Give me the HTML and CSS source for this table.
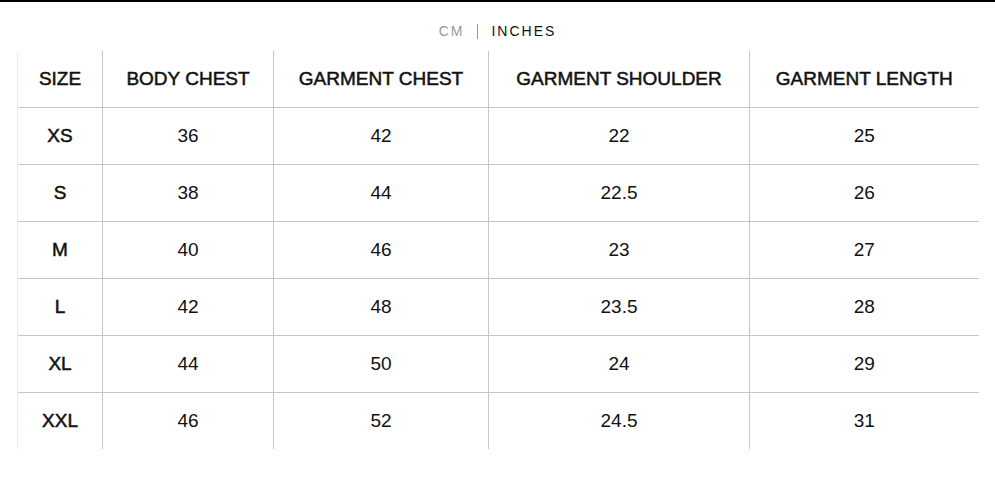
FILE: index.html
```html
<!DOCTYPE html>
<html>
<head>
<meta charset="utf-8">
<link rel="stylesheet" href="styles.css">
</head>
<body>
<div class="topline"></div>
<div class="units">
  <span class="unit unit-off">CM</span>
  <span class="sep"></span>
  <span class="unit unit-on">INCHES</span>
</div>
<table class="sizes">
  <thead>
    <tr>
      <th class="c1">SIZE</th>
      <th class="c2">BODY CHEST</th>
      <th class="c3">GARMENT CHEST</th>
      <th class="c4">GARMENT SHOULDER</th>
      <th class="c5">GARMENT LENGTH</th>
    </tr>
  </thead>
  <tbody>
    <tr><th>XS</th><td>36</td><td>42</td><td>22</td><td>25</td></tr>
    <tr><th>S</th><td>38</td><td>44</td><td>22.5</td><td>26</td></tr>
    <tr><th>M</th><td>40</td><td>46</td><td>23</td><td>27</td></tr>
    <tr><th>L</th><td>42</td><td>48</td><td>23.5</td><td>28</td></tr>
    <tr><th>XL</th><td>44</td><td>50</td><td>24</td><td>29</td></tr>
    <tr><th>XXL</th><td>46</td><td>52</td><td>24.5</td><td>31</td></tr>
  </tbody>
</table>
</body>
</html>
```
FILE: styles.css
```css
html, body {
  margin: 0;
  padding: 0;
  background: #fff;
}
body {
  font-family: "Liberation Sans", Arial, sans-serif;
  color: #111;
}
.topline {
  height: 2px;
  background: #000;
}
.units {
  display: flex;
  justify-content: center;
  align-items: center;
  gap: 13px;
  height: 20px;
  margin-top: 19px;
}
.unit {
  font-size: 14px;
  letter-spacing: 2px;
  line-height: 20px;
}
.unit-off {
  color: #9a9a9a;
}
.unit-on {
  color: #111;
}
.sep {
  width: 1px;
  height: 15px;
  background: #999;
}
.sizes {
  margin-top: 10px;
  margin-left: 17px;
  width: 961px;
  border-collapse: collapse;
  table-layout: fixed;
}
.sizes th, .sizes td {
  padding: 0;
  text-align: center;
  vertical-align: middle;
  border-left: 1px solid #c6c6c6;
  box-sizing: border-box;
}
.sizes thead th {
  height: 56px;
}
.sizes tbody th, .sizes tbody td {
  height: 57px;
}
.sizes tr > :first-child {
  border-left: 1px solid #ececec;
}
.sizes tr {
  border-bottom: 1px solid #c6c6c6;
}
.sizes tbody tr:last-child {
  border-bottom: none;
}
.sizes th {
  font-size: 19px;
  font-weight: normal;
  -webkit-text-stroke: 0.5px #111;
  color: #111;
}
.sizes td {
  font-size: 19px;
  color: #111;
}
.c1 { width: 85px; }
.c2 { width: 171px; }
.c3 { width: 215px; }
.c4 { width: 261px; }
.c5 { width: 229px; }
```
